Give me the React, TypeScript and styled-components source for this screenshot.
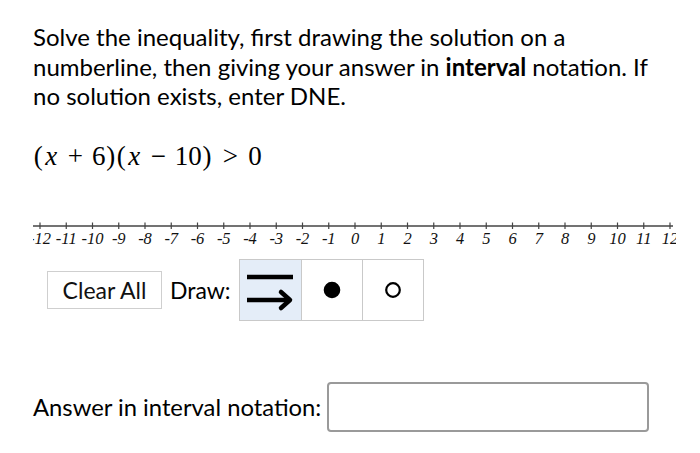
import React from "react";
import styled, { createGlobalStyle } from "styled-components";

const GlobalStyle = createGlobalStyle`
  html, body {
    margin: 0;
    padding: 0;
    background: #fff;
  }
  body {
    font-family: "Lato", "Open Sans", sans-serif;
    color: #000;
  }
`;

const Page = styled.div`
  width: 700px;
  height: 453px;
  padding: 22px 0 0 33px;
  box-sizing: border-box;
  overflow: hidden;
`;

const Prompt = styled.p`
  margin: 0;
  font-size: 24px;
  line-height: 29.5px;
  white-space: nowrap;
`;

const MathLine = styled.div`
  margin-top: 29px;
  font-family: "Liberation Serif", "DejaVu Serif", serif;
  font-size: 27px;
  line-height: 32px;
  white-space: nowrap;
  display: flex;
`;

// each glyph is given the advance width it has in the TeX math font
const Glyph = styled.span<{ $w: number; $italic?: boolean }>`
  display: inline-block;
  width: ${(p) => p.$w}em;
  text-align: center;
  font-style: ${(p) => (p.$italic ? "italic" : "normal")};
`;

const NumberLineWrap = styled.div`
  margin-top: 46px;
  height: 34px;
`;

const Toolbar = styled.div`
  display: flex;
  align-items: center;
  margin: 7px 0 0 14px;
  gap: 8px;
`;

const ClearButton = styled.button`
  width: 115px;
  height: 38px;
  padding: 0;
  background: #fff;
  border: 1px solid #cfcfcf;
  font-family: "Lato", "Open Sans", sans-serif;
  font-size: 23px;
  color: #111;
`;

const DrawLabel = styled.span`
  font-size: 23px;
`;

const ToolGroup = styled.div`
  display: flex;
  border: 1px solid #c9c9c9;
`;

const ToolButton = styled.button<{ $active?: boolean }>`
  width: 61px;
  height: 60px;
  padding: 0;
  border: none;
  border-left: 1px solid #c9c9c9;
  background: ${(p) => (p.$active ? "#e4edf8" : "#fff")};
  display: flex;
  align-items: center;
  justify-content: center;
  &:first-child {
    border-left: none;
  }
`;

const AnswerRow = styled.div`
  display: flex;
  align-items: center;
  gap: 6px;
  margin-top: 61px;
`;

const AnswerLabel = styled.span`
  font-size: 23.8px;
`;

const AnswerInput = styled.input`
  width: 322px;
  height: 50px;
  box-sizing: border-box;
  border: 2px solid #9a9a9a;
  border-radius: 4px;
  background: #fff;
`;

const TICK0 = 7;
const STEP = 26.25;
const values = Array.from({ length: 25 }, (_, i) => i - 12);

const NumberLine = () => (
  <svg width="643" height="34" viewBox="0 0 643 34">
    <line x1="0" y1="8" x2="640" y2="8" stroke="#444" strokeWidth="1.3" />
    {values.map((v, i) => {
      const x = TICK0 + i * STEP;
      return (
        <g key={v}>
          <line x1={x} y1="4.5" x2={x} y2="11" stroke="#444" strokeWidth="1.2" />
          <text
            x={x}
            y="25.5"
            textAnchor="middle"
            fontFamily="Liberation Serif, serif"
            fontStyle="italic"
            fontSize="16.5"
            fill="#111"
          >
            {v < 0 ? `-${-v}` : v}
          </text>
        </g>
      );
    })}
  </svg>
);

const RayIcon = () => (
  <svg width="61" height="60" viewBox="0 0 61 60">
    <line x1="7" y1="17" x2="53" y2="17" stroke="#000" strokeWidth="4.5" />
    <line x1="7" y1="40" x2="50" y2="40" stroke="#000" strokeWidth="4.5" />
    <polyline
      points="41,32 50,40 41,48"
      fill="none"
      stroke="#000"
      strokeWidth="4.5"
      strokeLinecap="round"
      strokeLinejoin="round"
    />
  </svg>
);

const DotIcon = ({ filled }: { filled: boolean }) => (
  <svg width="20" height="20" viewBox="0 0 20 20">
    <circle
      cx="10"
      cy="10"
      r={filled ? 7.2 : 6.8}
      fill={filled ? "#000" : "#fff"}
      stroke="#000"
      strokeWidth="2.2"
    />
  </svg>
);

const inequality: [string, number, boolean?][] = [
  ["(", 0.389],
  ["x", 0.572, true],
  ["+", 1.222],
  ["6", 0.5],
  [")", 0.389],
  ["(", 0.389],
  ["x", 0.572, true],
  ["−", 1.222],
  ["1", 0.5],
  ["0", 0.5],
  [")", 0.389],
  [">", 1.334],
  ["0", 0.5],
];

export default function App() {
  return (
    <>
      <GlobalStyle />
      <Page>
        <Prompt>
          Solve the inequality, first drawing the solution on a
          <br />
          numberline, then giving your answer in <b>interval</b> notation. If
          <br />
          no solution exists, enter DNE.
        </Prompt>
        <MathLine>
          {inequality.map(([ch, w, it], i) => (
            <Glyph key={i} $w={w} $italic={it}>
              {ch}
            </Glyph>
          ))}
        </MathLine>
        <NumberLineWrap>
          <NumberLine />
        </NumberLineWrap>
        <Toolbar>
          <ClearButton>Clear All</ClearButton>
          <DrawLabel>Draw:</DrawLabel>
          <ToolGroup>
            <ToolButton $active>
              <RayIcon />
            </ToolButton>
            <ToolButton>
              <DotIcon filled />
            </ToolButton>
            <ToolButton>
              <DotIcon filled={false} />
            </ToolButton>
          </ToolGroup>
        </Toolbar>
        <AnswerRow>
          <AnswerLabel>Answer in interval notation:</AnswerLabel>
          <AnswerInput />
        </AnswerRow>
      </Page>
    </>
  );
}
